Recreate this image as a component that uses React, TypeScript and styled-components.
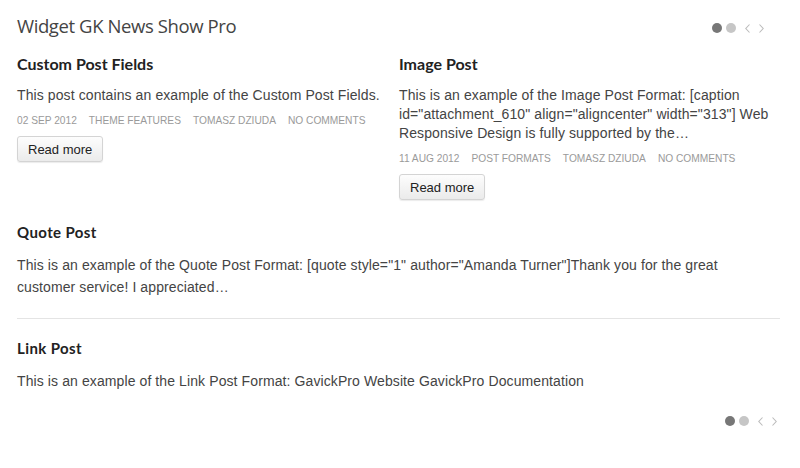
import React from "react";
import styled, { createGlobalStyle } from "styled-components";

const Global = createGlobalStyle`
  html, body { margin: 0; padding: 0; background: #fff; }
  body { font-family: "Liberation Sans", Arial, sans-serif; color: #444; }
`;

const Widget = styled.div`
  width: 800px;
  height: 468px;
  box-sizing: border-box;
  padding: 13px 20px 0 17px;
  display: flex;
  flex-direction: column;
`;

const Header = styled.div`
  display: flex;
  align-items: center;
  justify-content: space-between;
  height: 24px;
`;

const Title = styled.h3`
  margin: 0;
  font-family: "Open Sans", sans-serif;
  font-weight: 400;
  font-size: 18.5px;
  letter-spacing: -0.4px;
  color: #444;
`;

const Pager = styled.div<{ $right: number; $top: number }>`
  display: flex;
  align-items: center;
  gap: 4px;
  margin-right: ${(p) => p.$right}px;
  margin-top: ${(p) => p.$top}px;
`;

const Dot = styled.span<{ $active?: boolean }>`
  width: 10px;
  height: 10px;
  border-radius: 50%;
  background: ${(p) => (p.$active ? "#777" : "#c6c6c6")};
`;

const Arrow = styled.span`
  display: flex;
  margin-left: 5px;
`;

const Columns = styled.div`
  display: grid;
  grid-template-columns: 382px 1fr;
  margin-top: 17px;
`;

const Article = styled.div`
  display: flex;
  flex-direction: column;
`;

const PostTitle = styled.h4<{ $small?: boolean }>`
  margin: 0;
  font-family: Lato, sans-serif;
  font-weight: 700;
  font-size: ${(p) => (p.$small ? "15px" : "16px")};
  letter-spacing: ${(p) => (p.$small ? "0.4px" : "0")};
  line-height: 20px;
  color: #222;
`;

const Text = styled.p<{ $lh: number }>`
  margin: 12px 0 0;
  font-size: 14px;
  line-height: ${(p) => p.$lh}px;
  letter-spacing: 0.1px;
  color: #444;
`;

const Meta = styled.div`
  display: flex;
  gap: 12px;
  margin-top: 9px;
  font-size: 10.2px;
  line-height: 14px;
  text-transform: uppercase;
  color: #9a9a9a;
`;

const Button = styled.button`
  align-self: flex-start;
  margin-top: 8px;
  height: 26px;
  padding: 0 10px;
  font-family: "Liberation Sans", Arial, sans-serif;
  font-size: 13px;
  color: #222;
  border: 1px solid #d4d4d4;
  border-radius: 3px;
  background: linear-gradient(#fdfdfd, #ebebeb);
  box-shadow: 0 1px 1px rgba(0, 0, 0, 0.08);
`;

const Section = styled.div<{ $gap: number }>`
  margin-top: ${(p) => p.$gap}px;
`;

const Divider = styled.hr`
  margin: 20px 0 0;
  border: 0;
  border-top: 1px solid #e4e4e4;
`;

const Footer = styled.div`
  display: flex;
  justify-content: flex-end;
  margin-top: 24px;
`;

const Chevron = ({ dir }: { dir: "l" | "r" }) => (
  <svg width="5" height="9" viewBox="0 0 5 9">
    <path
      d={dir === "l" ? "M4.5 0.5 L0.8 4.5 L4.5 8.5" : "M0.5 0.5 L4.2 4.5 L0.5 8.5"}
      fill="none"
      stroke="#bbb"
      strokeWidth="1.1"
    />
  </svg>
);

const Pagination = ({ right, top }: { right: number; top: number }) => (
  <Pager $right={right} $top={top}>
    <Dot $active />
    <Dot />
    <Arrow>
      <Chevron dir="l" />
    </Arrow>
    <Arrow>
      <Chevron dir="r" />
    </Arrow>
  </Pager>
);

export default function App() {
  return (
    <>
      <Global />
      <Widget>
        <Header>
          <Title>Widget GK News Show Pro</Title>
          <Pagination right={16} top={6} />
        </Header>
        <Columns>
          <Article>
            <PostTitle>Custom Post Fields</PostTitle>
            <Text $lh={19}>This post contains an example of the Custom Post Fields.</Text>
            <Meta>
              <span>02 Sep 2012</span>
              <span>Theme Features</span>
              <span>Tomasz Dziuda</span>
              <span>No comments</span>
            </Meta>
            <Button>Read more</Button>
          </Article>
          <Article>
            <PostTitle>Image Post</PostTitle>
            <Text $lh={19}>
              This is an example of the Image Post Format: [caption
              id="attachment_610" align="aligncenter" width="313"] Web Responsive
              Design is fully supported by the…
            </Text>
            <Meta>
              <span>11 Aug 2012</span>
              <span>Post Formats</span>
              <span>Tomasz Dziuda</span>
              <span>No comments</span>
            </Meta>
            <Button>Read more</Button>
          </Article>
        </Columns>
        <Section $gap={22}>
          <PostTitle $small>Quote Post</PostTitle>
          <Text $lh={22}>
            This is an example of the Quote Post Format: [quote style="1"
            author="Amanda Turner"]Thank you for the great customer service! I
            appreciated…
          </Text>
        </Section>
        <Divider />
        <Section $gap={19}>
          <PostTitle $small>Link Post</PostTitle>
          <Text $lh={22}>
            This is an example of the Link Post Format: GavickPro Website
            GavickPro Documentation
          </Text>
        </Section>
        <Footer>
          <Pagination right={3} top={0} />
        </Footer>
      </Widget>
    </>
  );
}
